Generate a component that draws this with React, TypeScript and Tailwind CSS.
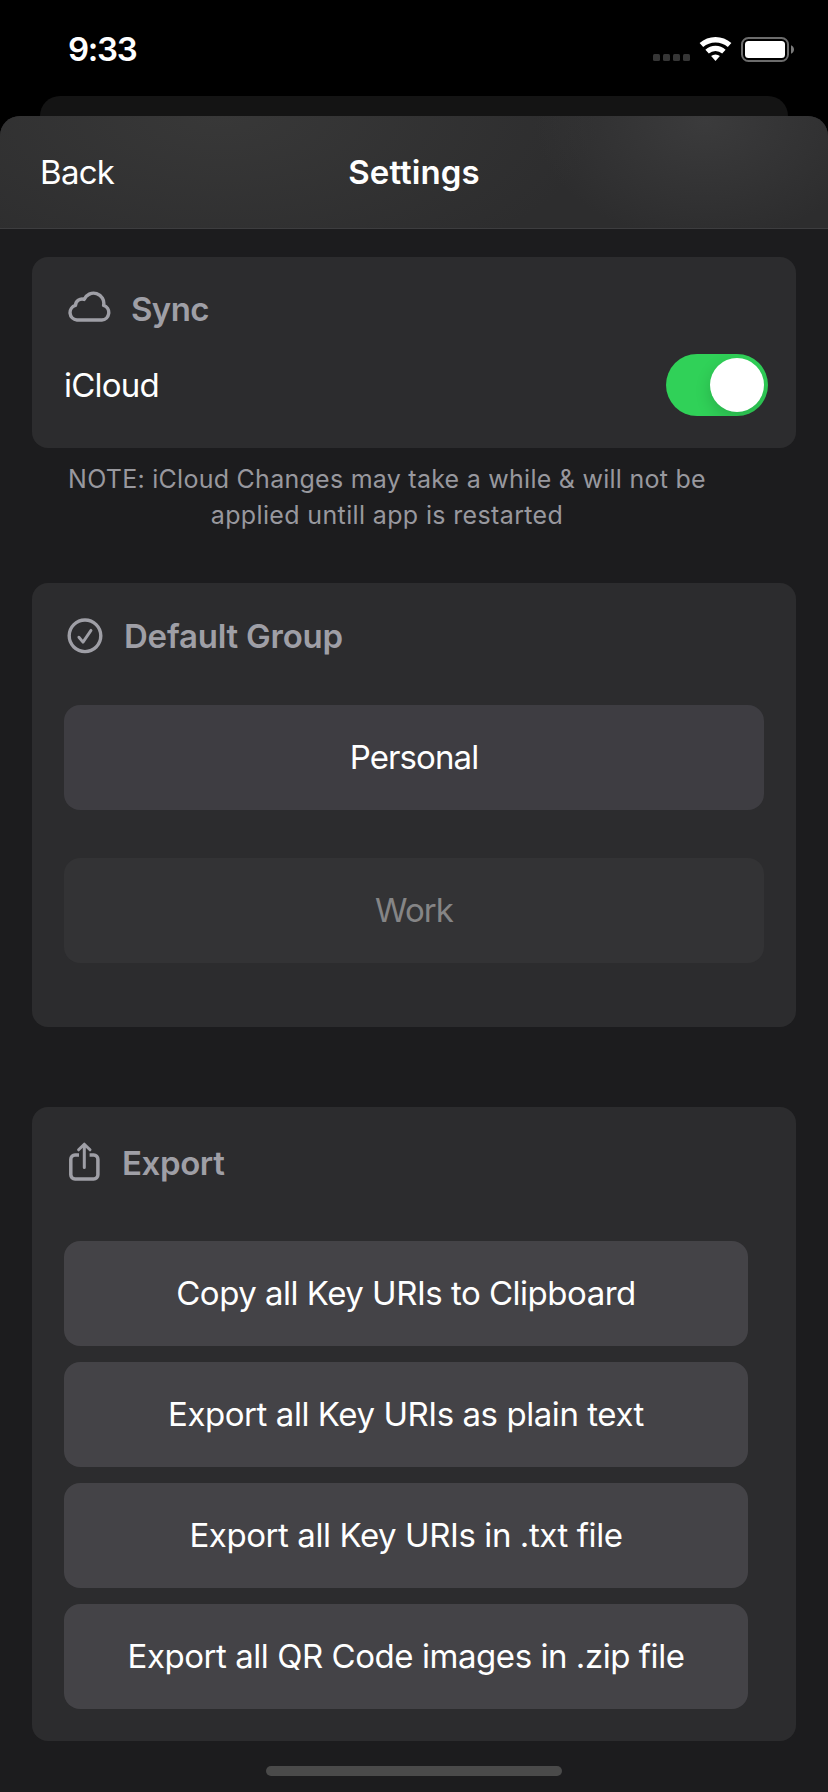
import type { ReactNode } from "react";

function StatusBar() {
  return (
    <div className="flex h-24 items-start justify-between bg-black pr-[34px] pl-[68px]">
      <span className="mt-[29px] text-[33px] leading-[41px] font-semibold tracking-[-1.3px]">9:33</span>
      <div className="mt-[37px] flex h-[25px] items-start">
        <div className="mt-[17px] flex gap-[3px]">
          {[0, 1, 2, 3].map((i) => (
            <span key={i} className="size-[7px] rounded-[1.5px] bg-[#363636]" />
          ))}
        </div>
        <svg className="ml-[9px] h-[25px] w-[33px]" viewBox="0 0 33 25" fill="none">
          <path d="M2.4 8.1A21.3 21.3 0 0 1 30.6 8.1" stroke="#fff" strokeWidth="5.4" />
          <path d="M8.1 14.6A12.65 12.65 0 0 1 24.9 14.6" stroke="#fff" strokeWidth="5.2" />
          <path d="M16.5 24L12.1 19A6.8 6.8 0 0 1 20.9 19Z" fill="#fff" />
        </svg>
        <svg className="ml-[9px] h-[25px] w-[53px]" viewBox="0 0 53 25" fill="none">
          <rect x="1" y="1" width="46" height="23" rx="6.5" stroke="#6c6c6c" strokeWidth="2" />
          <rect x="4" y="4" width="40" height="17" rx="3.5" fill="#fff" />
          <path d="M50 8.2C52 9 53 10.6 53 12.5S52 16 50 16.8Z" fill="#7a7a7a" />
        </svg>
      </div>
    </div>
  );
}

function CloudIcon() {
  return (
    <svg className="mb-1 h-8 w-[45px]" viewBox="0 0 45 32" fill="none" stroke="#9f9fa6" strokeWidth="3.4" strokeLinejoin="round">
      <path d="M9.9 29A7.45 7.45 0 0 1 8.5 14.4A6.6 6.6 0 0 1 17.2 8.4A10.2 10.2 0 0 1 36.6 14.4A7.5 7.5 0 0 1 34.8 29Z" />
    </svg>
  );
}

function CheckIcon() {
  return (
    <svg className="size-9" viewBox="0 0 36 36" fill="none" stroke="#9f9fa6" strokeLinecap="round" strokeLinejoin="round">
      <circle cx="18" cy="17.8" r="15.8" strokeWidth="3.4" />
      <path d="M11.9 19.2L16 24.1L24 12.4" strokeWidth="2.9" />
    </svg>
  );
}

function ShareIcon() {
  return (
    <svg className="mb-0.5 h-10 w-[34px]" viewBox="0 0 34 40" fill="none" stroke="#9f9fa6" strokeLinejoin="round">
      <path d="M11 13.1H7A4.2 4.2 0 0 0 2.8 17.3V32.7A4.2 4.2 0 0 0 7 36.9H25.7A4.2 4.2 0 0 0 29.9 32.7V17.3A4.2 4.2 0 0 0 25.7 13.1H21.6" strokeWidth="3.5" />
      <path d="M16.3 2.6V25.5M10.6 7.8L16.3 2.2L22 7.8" strokeWidth="3" strokeLinecap="round" />
    </svg>
  );
}

function Heading({ icon, children, className }: { icon: ReactNode; children: ReactNode; className: string }) {
  return (
    <div className={`flex items-center text-[33px] leading-[40px] font-semibold text-[#9f9fa6] ${className}`}>
      {icon}
      <h2>{children}</h2>
    </div>
  );
}

function ActionButton({ children, className }: { children: ReactNode; className: string }) {
  return (
    <button className={`flex h-[105px] items-center justify-center rounded-2xl pb-px text-[33px] leading-[40px] ${className}`}>
      {children}
    </button>
  );
}

export default function App() {
  return (
    <div className="flex h-[1792px] w-[828px] flex-col bg-black font-['Inter','Liberation_Sans',sans-serif] text-white">
      <StatusBar />
      <div className="mx-10 h-5 shrink-0 rounded-t-[20px] bg-[#141414]" />
      <main className="flex flex-1 flex-col overflow-hidden rounded-t-[20px] bg-[#1c1c1e]">
        <header className="grid h-[113px] shrink-0 grid-cols-3 items-center border-b border-[#3d3d3f] bg-[#2d2d2e] bg-[radial-gradient(ellipse_170px_120px_at_705px_5px,#3b3b3c,transparent),radial-gradient(ellipse_380px_170px_at_220px_0px,#383838,transparent)] px-10 text-[33px] leading-[40px]">
          <button className="justify-self-start tracking-[-0.7px]">Back</button>
          <h1 className="justify-self-center font-semibold tracking-[0.05px]">Settings</h1>
        </header>

        <section className="mx-8 mt-7 h-[191px] shrink-0 rounded-2xl bg-[#2c2c2e]">
          <Heading icon={<CloudIcon />} className="gap-[19px] pt-8 pl-[35px] tracking-[-0.6px]">Sync</Heading>
          <div className="mt-[25px] flex h-[62px] items-center justify-between pr-7 pl-8">
            <span className="text-[33px] leading-[40px] tracking-[-0.8px]">iCloud</span>
            <button role="switch" aria-checked="true" aria-label="iCloud" className="flex h-[62px] w-[102px] justify-end overflow-hidden rounded-full bg-[#30d158] p-1">
              <span className="size-[54px] rounded-full bg-white shadow-[0_6px_16px_rgba(0,0,0,0.16)]" />
            </button>
          </div>
        </section>
        <p className="mt-[13px] ml-8 w-[710px] text-center text-[25px] leading-[36px] tracking-[0.26px] text-[#98989e]">
          NOTE: iCloud Changes may take a while &amp; will not be
          <br />
          <span className="tracking-[0.36px]">applied untill app is restarted</span>
        </p>

        <section className="mx-8 mt-[50px] flex h-[444px] shrink-0 flex-col rounded-2xl bg-[#2c2c2e] px-8">
          <Heading icon={<CheckIcon />} className="gap-[21px] pt-[33px] pl-[3px] tracking-[-0.22px]">Default Group</Heading>
          <ActionButton className="mt-[49px] bg-[#3e3d42] tracking-[-0.9px]">Personal</ActionButton>
          <ActionButton className="mt-12 bg-[#333335] tracking-[-0.9px] text-[#858586]">Work</ActionButton>
        </section>

        <section className="mx-8 mt-20 flex h-[634px] shrink-0 flex-col rounded-2xl bg-[#2c2c2e] pr-12 pl-8">
          <Heading icon={<ShareIcon />} className="h-[76px] gap-5 pt-9 pl-1 tracking-[-0.4px]">Export</Heading>
          <div className="mt-[58px] flex flex-col gap-4">
            <ActionButton className="bg-[#444347] tracking-[-0.5px]">Copy all Key URIs to Clipboard</ActionButton>
            <ActionButton className="bg-[#444347] tracking-[-0.44px]">Export all Key URIs as plain text</ActionButton>
            <ActionButton className="bg-[#444347] tracking-[-0.42px]">Export all Key URIs in .txt file</ActionButton>
            <ActionButton className="bg-[#444347] tracking-[-0.45px]">Export all QR Code images in .zip file</ActionButton>
          </div>
        </section>
        <div className="mx-auto mt-[25px] h-[10px] w-[296px] shrink-0 rounded-full bg-[#4a4a4a]" />
      </main>
    </div>
  );
}
